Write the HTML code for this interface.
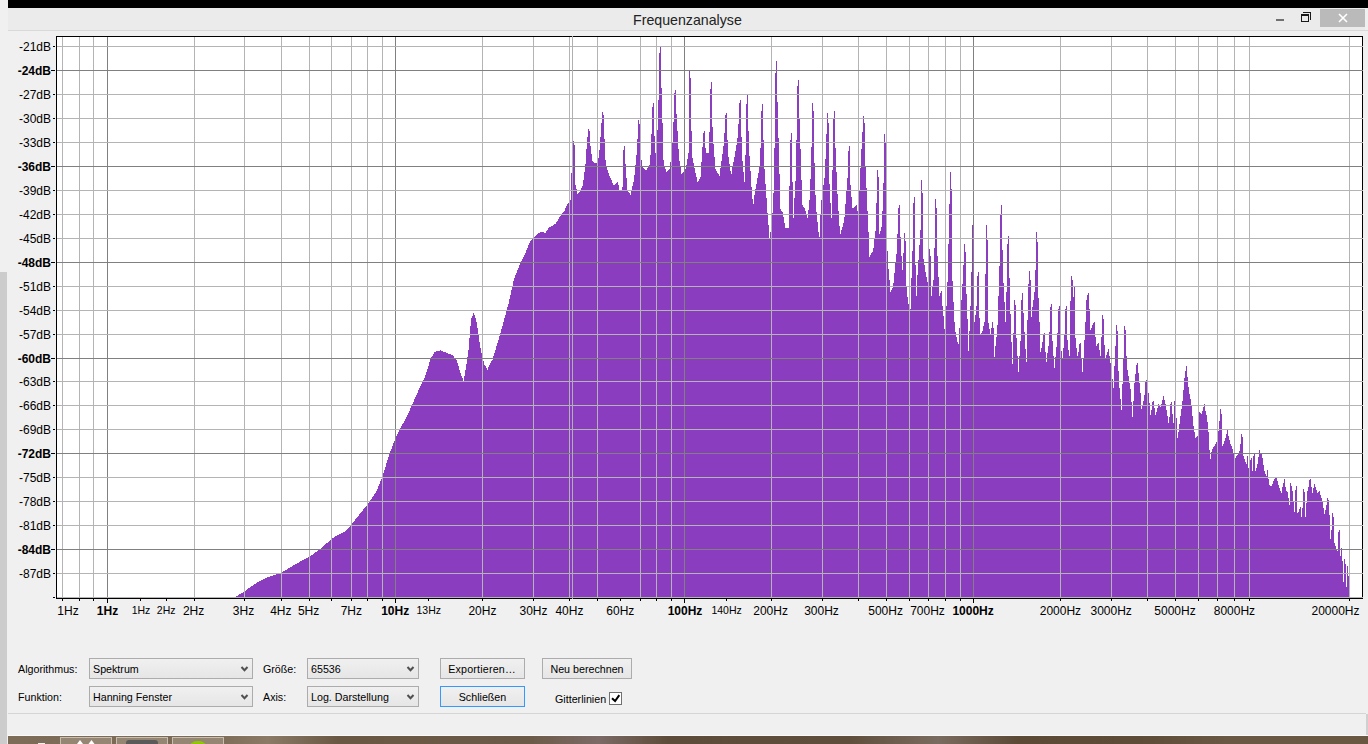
<!DOCTYPE html><html><head><meta charset="utf-8"><style>
html,body{margin:0;padding:0}
body{width:1368px;height:744px;overflow:hidden;position:relative;background:#f0f0f0;font-family:"Liberation Sans",sans-serif}
.abs{position:absolute}
.lbl{position:absolute;font-size:10.7px;color:#000;white-space:nowrap;line-height:1}
.cb{position:absolute;box-sizing:border-box;border:1px solid #acacac;background:linear-gradient(#f0f0f0,#e6e6e6);height:21px}
.cb span{position:absolute;left:3px;top:5px;font-size:10.7px;line-height:1;white-space:nowrap}
.cb svg{position:absolute;right:3px;top:7px}
.bt{position:absolute;box-sizing:border-box;border:1px solid #acacac;background:linear-gradient(#f0f0f0,#e6e6e6);height:21px;font-size:10.7px;line-height:1;text-align:center;white-space:nowrap}
.bt span{position:absolute;left:0;right:0;top:5px}

</style></head><body>
<div class="abs" style="left:0;top:272px;width:7px;height:472px;background:#cccccc"></div>
<div class="abs" style="left:8px;top:0;width:1360px;height:8px;background:#000"></div>
<div class="abs" style="left:8px;top:8px;width:1357px;height:22px;background:#ebebeb"></div>
<div class="abs" style="left:8px;top:30px;width:1360px;height:1px;background:#d9d9d9"></div>
<div class="abs" style="left:633px;top:13px;font-size:14.2px;line-height:1;color:#222;white-space:nowrap">Frequenzanalyse</div>
<div class="abs" style="left:1276px;top:19px;width:8px;height:2px;background:#707070"></div>
<svg class="abs" style="left:1298px;top:10px" width="16" height="14" viewBox="0 0 16 14" shape-rendering="crispEdges">
<path d="M5 2.5H12.5V9.5" fill="none" stroke="#1a1a1a" stroke-width="1"/>
<rect x="3.5" y="4.5" width="7" height="7" fill="none" stroke="#1a1a1a" stroke-width="1"/>
<rect x="3" y="4" width="8" height="2" fill="#1a1a1a"/>
</svg>
<div class="abs" style="left:1320px;top:9px;width:45px;height:18px;background:#bababa"></div>
<svg class="abs" style="left:1338px;top:13px" width="10" height="10" viewBox="0 0 10 10">
<path d="M1 1L9 9M9 1L1 9" stroke="#fff" stroke-width="1.6"/></svg>
<svg class="abs" style="left:0;top:0" width="1368" height="744" viewBox="0 0 1368 744">
<rect x="56" y="36" width="1306" height="562" fill="#fff"/>
<path d="M235,598 V598 H236 V596 H237 V596 H238 V595 H239 V594 H240 V594 H241 V593 H242 V593 H243 V592 H244 V591 H245 V591 H246 V590 H247 V589 H248 V588 H249 V588 H250 V587 H251 V586 H252 V586 H253 V585 H254 V584 H255 V584 H256 V583 H257 V582 H258 V582 H259 V581 H260 V581 H261 V580 H262 V580 H263 V579 H264 V579 H265 V578 H266 V578 H267 V577 H268 V577 H269 V577 H270 V576 H271 V576 H272 V576 H273 V575 H274 V575 H275 V575 H276 V574 H277 V574 H278 V574 H279 V573 H280 V573 H281 V573 H282 V572 H283 V571 H284 V571 H285 V570 H286 V570 H287 V569 H288 V568 H289 V568 H290 V567 H291 V567 H292 V566 H293 V565 H294 V565 H295 V564 H296 V564 H297 V563 H298 V563 H299 V562 H300 V561 H301 V561 H302 V560 H303 V560 H304 V559 H305 V559 H306 V558 H307 V558 H308 V557 H309 V557 H310 V556 H311 V555 H312 V555 H313 V554 H314 V553 H315 V552 H316 V552 H317 V551 H318 V550 H319 V549 H320 V549 H321 V548 H322 V547 H323 V546 H324 V545 H325 V544 H326 V543 H327 V543 H328 V542 H329 V541 H330 V540 H331 V539 H332 V538 H333 V538 H334 V537 H335 V536 H336 V536 H337 V535 H338 V535 H339 V534 H340 V534 H341 V533 H342 V533 H343 V532 H344 V532 H345 V531 H346 V530 H347 V529 H348 V528 H349 V527 H350 V526 H351 V524 H352 V523 H353 V522 H354 V521 H355 V519 H356 V518 H357 V517 H358 V516 H359 V514 H360 V513 H361 V512 H362 V511 H363 V509 H364 V508 H365 V507 H366 V506 H367 V504 H368 V503 H369 V502 H370 V500 H371 V499 H372 V497 H373 V496 H374 V494 H375 V493 H376 V491 H377 V489 H378 V486 H379 V484 H380 V481 H381 V479 H382 V476 H383 V473 H384 V470 H385 V467 H386 V463 H387 V460 H388 V457 H389 V454 H390 V451 H391 V449 H392 V446 H393 V443 H394 V441 H395 V438 H396 V436 H397 V434 H398 V432 H399 V430 H400 V428 H401 V426 H402 V424 H403 V423 H404 V421 H405 V419 H406 V417 H407 V415 H408 V413 H409 V411 H410 V408 H411 V406 H412 V404 H413 V402 H414 V399 H415 V397 H416 V395 H417 V393 H418 V390 H419 V388 H420 V386 H421 V384 H422 V382 H423 V380 H424 V378 H425 V375 H426 V372 H427 V369 H428 V366 H429 V362 H430 V359 H431 V357 H432 V356 H433 V354 H434 V352 H435 V352 H436 V351 H437 V351 H438 V351 H439 V351 H440 V350 H441 V351 H442 V351 H443 V352 H444 V352 H445 V352 H446 V353 H447 V353 H448 V354 H449 V354 H450 V354 H451 V355 H452 V355 H453 V356 H454 V358 H455 V359 H456 V360 H457 V363 H458 V366 H459 V370 H460 V373 H461 V376 H462 V378 H463 V381 H464 V376 H465 V370 H466 V364 H467 V357 H468 V350 H469 V338 H470 V326 H471 V318 H472 V316 H473 V313 H474 V315 H475 V318 H476 V322 H477 V328 H478 V335 H479 V342 H480 V348 H481 V353 H482 V357 H483 V361 H484 V365 H485 V366 H486 V368 H487 V370 H488 V367 H489 V365 H490 V363 H491 V361 H492 V360 H493 V356 H494 V353 H495 V350 H496 V346 H497 V343 H498 V340 H499 V336 H500 V333 H501 V329 H502 V326 H503 V322 H504 V318 H505 V315 H506 V311 H507 V307 H508 V304 H509 V299 H510 V295 H511 V290 H512 V286 H513 V281 H514 V278 H515 V275 H516 V273 H517 V270 H518 V268 H519 V265 H520 V263 H521 V261 H522 V259 H523 V257 H524 V255 H525 V253 H526 V250 H527 V248 H528 V245 H529 V243 H530 V241 H531 V240 H532 V239 H533 V238 H534 V237 H535 V236 H536 V235 H537 V234 H538 V233 H539 V233 H540 V232 H541 V232 H542 V232 H543 V232 H544 V233 H545 V233 H546 V231 H547 V230 H548 V228 H549 V227 H550 V227 H551 V226 H552 V226 H553 V225 H554 V224 H555 V224 H556 V222 H557 V221 H558 V219 H559 V217 H560 V216 H561 V214 H562 V213 H563 V212 H564 V211 H565 V208 H566 V206 H567 V204 H568 V203 H569 V202 H570 V200 H571 V173 H572 V154 H573 V141 H574 V145 H575 V185 H576 V189 H577 V194 H578 V193 H579 V192 H580 V190 H581 V188 H582 V186 H583 V180 H584 V172 H585 V164 H586 V149 H587 V137 H588 V129 H589 V131 H590 V146 H591 V154 H592 V161 H593 V162 H594 V163 H595 V163 H596 V163 H597 V164 H598 V158 H599 V150 H600 V137 H601 V123 H602 V112 H603 V115 H604 V139 H605 V160 H606 V166 H607 V170 H608 V173 H609 V176 H610 V178 H611 V180 H612 V183 H613 V185 H614 V185 H615 V184 H616 V183 H617 V182 H618 V185 H619 V190 H620 V190 H621 V190 H622 V187 H623 V150 H624 V146 H625 V164 H626 V178 H627 V191 H628 V192 H629 V193 H630 V195 H631 V190 H632 V186 H633 V182 H634 V175 H635 V165 H636 V155 H637 V139 H638 V120 H639 V124 H640 V146 H641 V160 H642 V167 H643 V168 H644 V169 H645 V170 H646 V170 H647 V168 H648 V166 H649 V165 H650 V155 H651 V134 H652 V107 H653 V103 H654 V136 H655 V153 H656 V164 H657 V130 H658 V100 H659 V53 H660 V47 H661 V88 H662 V123 H663 V160 H664 V166 H665 V169 H666 V172 H667 V171 H668 V170 H669 V169 H670 V162 H671 V152 H672 V142 H673 V122 H674 V93 H675 V90 H676 V114 H677 V131 H678 V149 H679 V161 H680 V167 H681 V174 H682 V173 H683 V172 H684 V171 H685 V169 H686 V165 H687 V159 H688 V153 H689 V70 H690 V78 H691 V131 H692 V158 H693 V163 H694 V168 H695 V173 H696 V177 H697 V182 H698 V181 H699 V179 H700 V177 H701 V162 H702 V147 H703 V133 H704 V131 H705 V148 H706 V153 H707 V153 H708 V153 H709 V132 H710 V89 H711 V82 H712 V127 H713 V144 H714 V157 H715 V169 H716 V171 H717 V173 H718 V174 H719 V176 H720 V168 H721 V161 H722 V154 H723 V146 H724 V133 H725 V115 H726 V113 H727 V140 H728 V157 H729 V164 H730 V171 H731 V174 H732 V167 H733 V162 H734 V157 H735 V151 H736 V145 H737 V138 H738 V124 H739 V103 H740 V100 H741 V137 H742 V161 H743 V172 H744 V182 H745 V155 H746 V104 H747 V95 H748 V131 H749 V156 H750 V171 H751 V187 H752 V199 H753 V204 H754 V195 H755 V189 H756 V184 H757 V178 H758 V173 H759 V167 H760 V148 H761 V111 H762 V104 H763 V140 H764 V169 H765 V184 H766 V198 H767 V213 H768 V225 H769 V239 H770 V232 H771 V222 H772 V213 H773 V193 H774 V148 H775 V73 H776 V61 H777 V102 H778 V138 H779 V174 H780 V209 H781 V211 H782 V212 H783 V217 H784 V223 H785 V228 H786 V228 H787 V228 H788 V228 H789 V186 H790 V140 H791 V133 H792 V182 H793 V218 H794 V198 H795 V181 H796 V140 H797 V86 H798 V80 H799 V118 H800 V149 H801 V180 H802 V205 H803 V207 H804 V208 H805 V211 H806 V214 H807 V218 H808 V210 H809 V200 H810 V179 H811 V147 H812 V103 H813 V111 H814 V163 H815 V195 H816 V212 H817 V222 H818 V232 H819 V237 H820 V215 H821 V200 H822 V192 H823 V185 H824 V178 H825 V159 H826 V134 H827 V113 H828 V123 H829 V184 H830 V203 H831 V218 H832 V170 H833 V118 H834 V111 H835 V148 H836 V172 H837 V194 H838 V211 H839 V226 H840 V234 H841 V230 H842 V227 H843 V223 H844 V217 H845 V204 H846 V191 H847 V178 H848 V151 H849 V146 H850 V185 H851 V197 H852 V208 H853 V208 H854 V207 H855 V206 H856 V205 H857 V211 H858 V215 H859 V190 H860 V168 H861 V149 H862 V132 H863 V116 H864 V123 H865 V166 H866 V188 H867 V211 H868 V232 H869 V257 H870 V255 H871 V253 H872 V252 H873 V248 H874 V239 H875 V231 H876 V203 H877 V170 H878 V177 H879 V234 H880 V231 H881 V227 H882 V211 H883 V183 H884 V134 H885 V142 H886 V207 H887 V251 H888 V269 H889 V280 H890 V292 H891 V290 H892 V288 H893 V283 H894 V273 H895 V263 H896 V254 H897 V234 H898 V208 H899 V205 H900 V237 H901 V256 H902 V270 H903 V253 H904 V233 H905 V241 H906 V286 H907 V297 H908 V304 H909 V307 H910 V309 H911 V278 H912 V251 H913 V203 H914 V197 H915 V265 H916 V296 H917 V275 H918 V260 H919 V245 H920 V230 H921 V180 H922 V193 H923 V259 H924 V265 H925 V272 H926 V277 H927 V282 H928 V286 H929 V249 H930 V256 H931 V296 H932 V287 H933 V280 H934 V248 H935 V199 H936 V208 H937 V256 H938 V277 H939 V296 H940 V293 H941 V291 H942 V306 H943 V316 H944 V329 H945 V338 H946 V306 H947 V282 H948 V244 H949 V204 H950 V172 H951 V189 H952 V281 H953 V302 H954 V322 H955 V332 H956 V337 H957 V342 H958 V344 H959 V328 H960 V317 H961 V300 H962 V284 H963 V265 H964 V244 H965 V252 H966 V294 H967 V319 H968 V351 H969 V331 H970 V306 H971 V272 H972 V225 H973 V237 H974 V322 H975 V315 H976 V306 H977 V276 H978 V272 H979 V318 H980 V335 H981 V333 H982 V331 H983 V326 H984 V322 H985 V274 H986 V225 H987 V240 H988 V323 H989 V329 H990 V335 H991 V328 H992 V322 H993 V328 H994 V357 H995 V346 H996 V337 H997 V325 H998 V296 H999 V266 H1000 V214 H1001 V205 H1002 V250 H1003 V283 H1004 V302 H1005 V322 H1006 V292 H1007 V244 H1008 V236 H1009 V278 H1010 V314 H1011 V342 H1012 V364 H1013 V333 H1014 V300 H1015 V305 H1016 V338 H1017 V356 H1018 V372 H1019 V356 H1020 V341 H1021 V300 H1022 V293 H1023 V313 H1024 V332 H1025 V349 H1026 V362 H1027 V320 H1028 V284 H1029 V271 H1030 V280 H1031 V317 H1032 V307 H1033 V300 H1034 V292 H1035 V270 H1036 V232 H1037 V242 H1038 V298 H1039 V322 H1040 V352 H1041 V348 H1042 V342 H1043 V334 H1044 V333 H1045 V352 H1046 V362 H1047 V353 H1048 V346 H1049 V332 H1050 V307 H1051 V304 H1052 V341 H1053 V356 H1054 V368 H1055 V357 H1056 V347 H1057 V333 H1058 V309 H1059 V306 H1060 V338 H1061 V351 H1062 V359 H1063 V348 H1064 V334 H1065 V309 H1066 V306 H1067 V340 H1068 V350 H1069 V356 H1070 V301 H1071 V276 H1072 V280 H1073 V297 H1074 V286 H1075 V338 H1076 V348 H1077 V356 H1078 V352 H1079 V344 H1080 V343 H1081 V358 H1082 V372 H1083 V358 H1084 V340 H1085 V322 H1086 V300 H1087 V295 H1088 V293 H1089 V309 H1090 V330 H1091 V328 H1092 V325 H1093 V323 H1094 V322 H1095 V337 H1096 V346 H1097 V344 H1098 V343 H1099 V350 H1100 V356 H1101 V337 H1102 V315 H1103 V319 H1104 V345 H1105 V359 H1106 V355 H1107 V352 H1108 V349 H1109 V356 H1110 V363 H1111 V370 H1112 V379 H1113 V388 H1114 V366 H1115 V346 H1116 V325 H1117 V331 H1118 V371 H1119 V388 H1120 V399 H1121 V410 H1122 V384 H1123 V358 H1124 V326 H1125 V330 H1126 V356 H1127 V370 H1128 V376 H1129 V383 H1130 V389 H1131 V402 H1132 V417 H1133 V401 H1134 V383 H1135 V374 H1136 V365 H1137 V363 H1138 V373 H1139 V383 H1140 V393 H1141 V409 H1142 V406 H1143 V401 H1144 V395 H1145 V381 H1146 V380 H1147 V388 H1148 V393 H1149 V403 H1150 V415 H1151 V410 H1152 V402 H1153 V401 H1154 V408 H1155 V415 H1156 V412 H1157 V408 H1158 V404 H1159 V406 H1160 V407 H1161 V404 H1162 V400 H1163 V396 H1164 V400 H1165 V404 H1166 V410 H1167 V416 H1168 V423 H1169 V417 H1170 V404 H1171 V402 H1172 V414 H1173 V423 H1174 V401 H1175 V397 H1176 V418 H1177 V438 H1178 V432 H1179 V424 H1180 V416 H1181 V409 H1182 V401 H1183 V390 H1184 V378 H1185 V371 H1186 V366 H1187 V377 H1188 V387 H1189 V394 H1190 V399 H1191 V406 H1192 V416 H1193 V426 H1194 V432 H1195 V438 H1196 V437 H1197 V436 H1198 V425 H1199 V412 H1200 V413 H1201 V414 H1202 V411 H1203 V407 H1204 V404 H1205 V411 H1206 V415 H1207 V422 H1208 V432 H1209 V450 H1210 V459 H1211 V452 H1212 V449 H1213 V447 H1214 V446 H1215 V444 H1216 V442 H1217 V440 H1218 V431 H1219 V421 H1220 V409 H1221 V414 H1222 V446 H1223 V444 H1224 V441 H1225 V438 H1226 V434 H1227 V430 H1228 V436 H1229 V440 H1230 V444 H1231 V446 H1232 V449 H1233 V453 H1234 V459 H1235 V458 H1236 V456 H1237 V455 H1238 V453 H1239 V451 H1240 V444 H1241 V434 H1242 V437 H1243 V456 H1244 V459 H1245 V462 H1246 V464 H1247 V456 H1248 V468 H1249 V464 H1250 V460 H1251 V458 H1252 V471 H1253 V456 H1254 V454 H1255 V471 H1256 V468 H1257 V464 H1258 V457 H1259 V450 H1260 V454 H1261 V454 H1262 V458 H1263 V465 H1264 V471 H1265 V474 H1266 V476 H1267 V470 H1268 V479 H1269 V485 H1270 V486 H1271 V486 H1272 V484 H1273 V481 H1274 V479 H1275 V478 H1276 V477 H1277 V481 H1278 V485 H1279 V488 H1280 V491 H1281 V493 H1282 V487 H1283 V483 H1284 V479 H1285 V487 H1286 V491 H1287 V492 H1288 V498 H1289 V505 H1290 V483 H1291 V486 H1292 V491 H1293 V501 H1294 V512 H1295 V490 H1296 V486 H1297 V513 H1298 V512 H1299 V509 H1300 V507 H1301 V517 H1302 V508 H1303 V489 H1304 V492 H1305 V517 H1306 V503 H1307 V491 H1308 V487 H1309 V480 H1310 V479 H1311 V487 H1312 V493 H1313 V488 H1314 V484 H1315 V487 H1316 V490 H1317 V493 H1318 V492 H1319 V491 H1320 V495 H1321 V498 H1322 V502 H1323 V508 H1324 V514 H1325 V510 H1326 V505 H1327 V498 H1328 V500 H1329 V515 H1330 V539 H1331 V530 H1332 V513 H1333 V517 H1334 V543 H1335 V546 H1336 V549 H1337 V551 H1338 V532 H1339 V530 H1340 V556 H1341 V548 H1342 V561 H1343 V582 H1344 V559 H1345 V564 H1346 V587 H1347 V566 H1348 V576 H1349 V598 Z" fill="rgb(138,61,191)" shape-rendering="crispEdges"/>
<g shape-rendering="crispEdges">
<rect x="62" y="37" width="1" height="561" fill="#b4b4b4"/>
<rect x="79" y="37" width="1" height="561" fill="#b4b4b4"/>
<rect x="93" y="37" width="1" height="561" fill="#b4b4b4"/>
<rect x="107" y="37" width="1" height="561" fill="#808080"/>
<rect x="194" y="37" width="1" height="561" fill="#b4b4b4"/>
<rect x="244" y="37" width="1" height="561" fill="#b4b4b4"/>
<rect x="281" y="37" width="1" height="561" fill="#b4b4b4"/>
<rect x="309" y="37" width="1" height="561" fill="#b4b4b4"/>
<rect x="331" y="37" width="1" height="561" fill="#b4b4b4"/>
<rect x="351" y="37" width="1" height="561" fill="#b4b4b4"/>
<rect x="367" y="37" width="1" height="561" fill="#b4b4b4"/>
<rect x="382" y="37" width="1" height="561" fill="#b4b4b4"/>
<rect x="395" y="37" width="1" height="561" fill="#808080"/>
<rect x="482" y="37" width="1" height="561" fill="#b4b4b4"/>
<rect x="533" y="37" width="1" height="561" fill="#b4b4b4"/>
<rect x="569" y="37" width="1" height="561" fill="#b4b4b4"/>
<rect x="597" y="37" width="1" height="561" fill="#b4b4b4"/>
<rect x="640" y="37" width="1" height="561" fill="#b4b4b4"/>
<rect x="656" y="37" width="1" height="561" fill="#b4b4b4"/>
<rect x="671" y="37" width="1" height="561" fill="#b4b4b4"/>
<rect x="684" y="37" width="1" height="561" fill="#808080"/>
<rect x="771" y="37" width="1" height="561" fill="#b4b4b4"/>
<rect x="822" y="37" width="1" height="561" fill="#b4b4b4"/>
<rect x="858" y="37" width="1" height="561" fill="#b4b4b4"/>
<rect x="886" y="37" width="1" height="561" fill="#b4b4b4"/>
<rect x="909" y="37" width="1" height="561" fill="#b4b4b4"/>
<rect x="928" y="37" width="1" height="561" fill="#b4b4b4"/>
<rect x="945" y="37" width="1" height="561" fill="#b4b4b4"/>
<rect x="960" y="37" width="1" height="561" fill="#b4b4b4"/>
<rect x="973" y="37" width="1" height="561" fill="#808080"/>
<rect x="1060" y="37" width="1" height="561" fill="#b4b4b4"/>
<rect x="1111" y="37" width="1" height="561" fill="#b4b4b4"/>
<rect x="1147" y="37" width="1" height="561" fill="#b4b4b4"/>
<rect x="1175" y="37" width="1" height="561" fill="#b4b4b4"/>
<rect x="1198" y="37" width="1" height="561" fill="#b4b4b4"/>
<rect x="1217" y="37" width="1" height="561" fill="#b4b4b4"/>
<rect x="1234" y="37" width="1" height="561" fill="#b4b4b4"/>
<rect x="1249" y="37" width="1" height="561" fill="#b4b4b4"/>
<rect x="1349" y="37" width="1" height="561" fill="#b4b4b4"/>
<rect x="57" y="46" width="1305" height="1" fill="#b4b4b4"/>
<rect x="57" y="70" width="1305" height="1" fill="#808080"/>
<rect x="57" y="94" width="1305" height="1" fill="#b4b4b4"/>
<rect x="57" y="118" width="1305" height="1" fill="#b4b4b4"/>
<rect x="57" y="142" width="1305" height="1" fill="#b4b4b4"/>
<rect x="57" y="166" width="1305" height="1" fill="#808080"/>
<rect x="57" y="190" width="1305" height="1" fill="#b4b4b4"/>
<rect x="57" y="214" width="1305" height="1" fill="#b4b4b4"/>
<rect x="57" y="238" width="1305" height="1" fill="#b4b4b4"/>
<rect x="57" y="262" width="1305" height="1" fill="#808080"/>
<rect x="57" y="286" width="1305" height="1" fill="#b4b4b4"/>
<rect x="57" y="310" width="1305" height="1" fill="#b4b4b4"/>
<rect x="57" y="334" width="1305" height="1" fill="#b4b4b4"/>
<rect x="57" y="358" width="1305" height="1" fill="#808080"/>
<rect x="57" y="381" width="1305" height="1" fill="#b4b4b4"/>
<rect x="57" y="405" width="1305" height="1" fill="#b4b4b4"/>
<rect x="57" y="429" width="1305" height="1" fill="#b4b4b4"/>
<rect x="57" y="453" width="1305" height="1" fill="#808080"/>
<rect x="57" y="477" width="1305" height="1" fill="#b4b4b4"/>
<rect x="57" y="501" width="1305" height="1" fill="#b4b4b4"/>
<rect x="57" y="525" width="1305" height="1" fill="#b4b4b4"/>
<rect x="57" y="549" width="1305" height="1" fill="#808080"/>
<rect x="57" y="573" width="1305" height="1" fill="#b4b4b4"/>
<rect x="57" y="597" width="1305" height="1" fill="#b4b4b4"/>
</g>
<rect x="56.5" y="36.5" width="1306" height="562" fill="none" stroke="#000" stroke-width="1" shape-rendering="crispEdges"/>
<rect x="572" y="36" width="1" height="563" fill="#b0b0b0" shape-rendering="crispEdges"/>
<rect x="1362" y="46" width="1" height="1" fill="#b4b4b4" shape-rendering="crispEdges"/>
<rect x="1362" y="70" width="1" height="1" fill="#808080" shape-rendering="crispEdges"/>
<rect x="1362" y="94" width="1" height="1" fill="#b4b4b4" shape-rendering="crispEdges"/>
<rect x="1362" y="118" width="1" height="1" fill="#b4b4b4" shape-rendering="crispEdges"/>
<rect x="1362" y="142" width="1" height="1" fill="#b4b4b4" shape-rendering="crispEdges"/>
<rect x="1362" y="166" width="1" height="1" fill="#808080" shape-rendering="crispEdges"/>
<rect x="1362" y="190" width="1" height="1" fill="#b4b4b4" shape-rendering="crispEdges"/>
<rect x="1362" y="214" width="1" height="1" fill="#b4b4b4" shape-rendering="crispEdges"/>
<rect x="1362" y="238" width="1" height="1" fill="#b4b4b4" shape-rendering="crispEdges"/>
<rect x="1362" y="262" width="1" height="1" fill="#808080" shape-rendering="crispEdges"/>
<rect x="1362" y="286" width="1" height="1" fill="#b4b4b4" shape-rendering="crispEdges"/>
<rect x="1362" y="310" width="1" height="1" fill="#b4b4b4" shape-rendering="crispEdges"/>
<rect x="1362" y="334" width="1" height="1" fill="#b4b4b4" shape-rendering="crispEdges"/>
<rect x="1362" y="358" width="1" height="1" fill="#808080" shape-rendering="crispEdges"/>
<rect x="1362" y="381" width="1" height="1" fill="#b4b4b4" shape-rendering="crispEdges"/>
<rect x="1362" y="405" width="1" height="1" fill="#b4b4b4" shape-rendering="crispEdges"/>
<rect x="1362" y="429" width="1" height="1" fill="#b4b4b4" shape-rendering="crispEdges"/>
<rect x="1362" y="453" width="1" height="1" fill="#808080" shape-rendering="crispEdges"/>
<rect x="1362" y="477" width="1" height="1" fill="#b4b4b4" shape-rendering="crispEdges"/>
<rect x="1362" y="501" width="1" height="1" fill="#b4b4b4" shape-rendering="crispEdges"/>
<rect x="1362" y="525" width="1" height="1" fill="#b4b4b4" shape-rendering="crispEdges"/>
<rect x="1362" y="549" width="1" height="1" fill="#808080" shape-rendering="crispEdges"/>
<rect x="1362" y="573" width="1" height="1" fill="#b4b4b4" shape-rendering="crispEdges"/>
<rect x="1362" y="597" width="1" height="1" fill="#b4b4b4" shape-rendering="crispEdges"/>
<rect x="53" y="46" width="2" height="1" fill="#000" shape-rendering="crispEdges"/>
<text x="51" y="50.5" text-anchor="end" font-family="Liberation Sans" font-size="12" font-weight="normal" fill="#000">-21dB</text>
<rect x="51" y="70" width="4" height="1" fill="#000" shape-rendering="crispEdges"/>
<text x="51" y="74.5" text-anchor="end" font-family="Liberation Sans" font-size="12" font-weight="bold" fill="#000">-24dB</text>
<rect x="53" y="94" width="2" height="1" fill="#000" shape-rendering="crispEdges"/>
<text x="51" y="98.5" text-anchor="end" font-family="Liberation Sans" font-size="12" font-weight="normal" fill="#000">-27dB</text>
<rect x="53" y="118" width="2" height="1" fill="#000" shape-rendering="crispEdges"/>
<text x="51" y="122.5" text-anchor="end" font-family="Liberation Sans" font-size="12" font-weight="normal" fill="#000">-30dB</text>
<rect x="53" y="142" width="2" height="1" fill="#000" shape-rendering="crispEdges"/>
<text x="51" y="146.5" text-anchor="end" font-family="Liberation Sans" font-size="12" font-weight="normal" fill="#000">-33dB</text>
<rect x="51" y="166" width="4" height="1" fill="#000" shape-rendering="crispEdges"/>
<text x="51" y="170.5" text-anchor="end" font-family="Liberation Sans" font-size="12" font-weight="bold" fill="#000">-36dB</text>
<rect x="53" y="190" width="2" height="1" fill="#000" shape-rendering="crispEdges"/>
<text x="51" y="194.5" text-anchor="end" font-family="Liberation Sans" font-size="12" font-weight="normal" fill="#000">-39dB</text>
<rect x="53" y="214" width="2" height="1" fill="#000" shape-rendering="crispEdges"/>
<text x="51" y="218.5" text-anchor="end" font-family="Liberation Sans" font-size="12" font-weight="normal" fill="#000">-42dB</text>
<rect x="53" y="238" width="2" height="1" fill="#000" shape-rendering="crispEdges"/>
<text x="51" y="242.5" text-anchor="end" font-family="Liberation Sans" font-size="12" font-weight="normal" fill="#000">-45dB</text>
<rect x="51" y="262" width="4" height="1" fill="#000" shape-rendering="crispEdges"/>
<text x="51" y="266.5" text-anchor="end" font-family="Liberation Sans" font-size="12" font-weight="bold" fill="#000">-48dB</text>
<rect x="53" y="286" width="2" height="1" fill="#000" shape-rendering="crispEdges"/>
<text x="51" y="290.5" text-anchor="end" font-family="Liberation Sans" font-size="12" font-weight="normal" fill="#000">-51dB</text>
<rect x="53" y="310" width="2" height="1" fill="#000" shape-rendering="crispEdges"/>
<text x="51" y="314.5" text-anchor="end" font-family="Liberation Sans" font-size="12" font-weight="normal" fill="#000">-54dB</text>
<rect x="53" y="334" width="2" height="1" fill="#000" shape-rendering="crispEdges"/>
<text x="51" y="338.5" text-anchor="end" font-family="Liberation Sans" font-size="12" font-weight="normal" fill="#000">-57dB</text>
<rect x="51" y="358" width="4" height="1" fill="#000" shape-rendering="crispEdges"/>
<text x="51" y="362.5" text-anchor="end" font-family="Liberation Sans" font-size="12" font-weight="bold" fill="#000">-60dB</text>
<rect x="53" y="381" width="2" height="1" fill="#000" shape-rendering="crispEdges"/>
<text x="51" y="385.5" text-anchor="end" font-family="Liberation Sans" font-size="12" font-weight="normal" fill="#000">-63dB</text>
<rect x="53" y="405" width="2" height="1" fill="#000" shape-rendering="crispEdges"/>
<text x="51" y="409.5" text-anchor="end" font-family="Liberation Sans" font-size="12" font-weight="normal" fill="#000">-66dB</text>
<rect x="53" y="429" width="2" height="1" fill="#000" shape-rendering="crispEdges"/>
<text x="51" y="433.5" text-anchor="end" font-family="Liberation Sans" font-size="12" font-weight="normal" fill="#000">-69dB</text>
<rect x="51" y="453" width="4" height="1" fill="#000" shape-rendering="crispEdges"/>
<text x="51" y="457.5" text-anchor="end" font-family="Liberation Sans" font-size="12" font-weight="bold" fill="#000">-72dB</text>
<rect x="53" y="477" width="2" height="1" fill="#000" shape-rendering="crispEdges"/>
<text x="51" y="481.5" text-anchor="end" font-family="Liberation Sans" font-size="12" font-weight="normal" fill="#000">-75dB</text>
<rect x="53" y="501" width="2" height="1" fill="#000" shape-rendering="crispEdges"/>
<text x="51" y="505.5" text-anchor="end" font-family="Liberation Sans" font-size="12" font-weight="normal" fill="#000">-78dB</text>
<rect x="53" y="525" width="2" height="1" fill="#000" shape-rendering="crispEdges"/>
<text x="51" y="529.5" text-anchor="end" font-family="Liberation Sans" font-size="12" font-weight="normal" fill="#000">-81dB</text>
<rect x="51" y="549" width="4" height="1" fill="#000" shape-rendering="crispEdges"/>
<text x="51" y="553.5" text-anchor="end" font-family="Liberation Sans" font-size="12" font-weight="bold" fill="#000">-84dB</text>
<rect x="53" y="573" width="2" height="1" fill="#000" shape-rendering="crispEdges"/>
<text x="51" y="577.5" text-anchor="end" font-family="Liberation Sans" font-size="12" font-weight="normal" fill="#000">-87dB</text>
<rect x="53" y="597" width="2" height="1" fill="#000" shape-rendering="crispEdges"/>
<rect x="62" y="599" width="1" height="2" fill="#000" shape-rendering="crispEdges"/>
<rect x="79" y="599" width="1" height="2" fill="#000" shape-rendering="crispEdges"/>
<rect x="93" y="599" width="1" height="2" fill="#000" shape-rendering="crispEdges"/>
<rect x="107" y="599" width="1" height="4" fill="#000" shape-rendering="crispEdges"/>
<rect x="194" y="599" width="1" height="2" fill="#000" shape-rendering="crispEdges"/>
<rect x="244" y="599" width="1" height="2" fill="#000" shape-rendering="crispEdges"/>
<rect x="281" y="599" width="1" height="2" fill="#000" shape-rendering="crispEdges"/>
<rect x="309" y="599" width="1" height="2" fill="#000" shape-rendering="crispEdges"/>
<rect x="331" y="599" width="1" height="2" fill="#000" shape-rendering="crispEdges"/>
<rect x="351" y="599" width="1" height="2" fill="#000" shape-rendering="crispEdges"/>
<rect x="367" y="599" width="1" height="2" fill="#000" shape-rendering="crispEdges"/>
<rect x="382" y="599" width="1" height="2" fill="#000" shape-rendering="crispEdges"/>
<rect x="395" y="599" width="1" height="4" fill="#000" shape-rendering="crispEdges"/>
<rect x="482" y="599" width="1" height="2" fill="#000" shape-rendering="crispEdges"/>
<rect x="533" y="599" width="1" height="2" fill="#000" shape-rendering="crispEdges"/>
<rect x="569" y="599" width="1" height="2" fill="#000" shape-rendering="crispEdges"/>
<rect x="597" y="599" width="1" height="2" fill="#000" shape-rendering="crispEdges"/>
<rect x="620" y="599" width="1" height="2" fill="#000" shape-rendering="crispEdges"/>
<rect x="640" y="599" width="1" height="2" fill="#000" shape-rendering="crispEdges"/>
<rect x="656" y="599" width="1" height="2" fill="#000" shape-rendering="crispEdges"/>
<rect x="671" y="599" width="1" height="2" fill="#000" shape-rendering="crispEdges"/>
<rect x="684" y="599" width="1" height="4" fill="#000" shape-rendering="crispEdges"/>
<rect x="771" y="599" width="1" height="2" fill="#000" shape-rendering="crispEdges"/>
<rect x="822" y="599" width="1" height="2" fill="#000" shape-rendering="crispEdges"/>
<rect x="858" y="599" width="1" height="2" fill="#000" shape-rendering="crispEdges"/>
<rect x="886" y="599" width="1" height="2" fill="#000" shape-rendering="crispEdges"/>
<rect x="909" y="599" width="1" height="2" fill="#000" shape-rendering="crispEdges"/>
<rect x="928" y="599" width="1" height="2" fill="#000" shape-rendering="crispEdges"/>
<rect x="945" y="599" width="1" height="2" fill="#000" shape-rendering="crispEdges"/>
<rect x="960" y="599" width="1" height="2" fill="#000" shape-rendering="crispEdges"/>
<rect x="973" y="599" width="1" height="4" fill="#000" shape-rendering="crispEdges"/>
<rect x="1060" y="599" width="1" height="2" fill="#000" shape-rendering="crispEdges"/>
<rect x="1111" y="599" width="1" height="2" fill="#000" shape-rendering="crispEdges"/>
<rect x="1147" y="599" width="1" height="2" fill="#000" shape-rendering="crispEdges"/>
<rect x="1175" y="599" width="1" height="2" fill="#000" shape-rendering="crispEdges"/>
<rect x="1198" y="599" width="1" height="2" fill="#000" shape-rendering="crispEdges"/>
<rect x="1217" y="599" width="1" height="2" fill="#000" shape-rendering="crispEdges"/>
<rect x="1234" y="599" width="1" height="2" fill="#000" shape-rendering="crispEdges"/>
<rect x="1249" y="599" width="1" height="2" fill="#000" shape-rendering="crispEdges"/>
<rect x="1349" y="599" width="1" height="2" fill="#000" shape-rendering="crispEdges"/>
<rect x="140" y="599" width="1" height="2" fill="#000" shape-rendering="crispEdges"/>
<rect x="166" y="599" width="1" height="2" fill="#000" shape-rendering="crispEdges"/>
<rect x="428" y="599" width="1" height="2" fill="#000" shape-rendering="crispEdges"/>
<rect x="726" y="599" width="1" height="2" fill="#000" shape-rendering="crispEdges"/>
<text x="68" y="614.5" text-anchor="middle" font-family="Liberation Sans" font-size="12" font-weight="normal" fill="#000">1Hz</text>
<text x="107.5" y="614.5" text-anchor="middle" font-family="Liberation Sans" font-size="12" font-weight="bold" fill="#000">1Hz</text>
<text x="141" y="614" text-anchor="middle" font-family="Liberation Sans" font-size="10.5" font-weight="normal" fill="#000">1Hz</text>
<text x="166.2" y="614" text-anchor="middle" font-family="Liberation Sans" font-size="10.5" font-weight="normal" fill="#000">2Hz</text>
<text x="193.6" y="614.5" text-anchor="middle" font-family="Liberation Sans" font-size="12" font-weight="normal" fill="#000">2Hz</text>
<text x="243.5" y="614.5" text-anchor="middle" font-family="Liberation Sans" font-size="12" font-weight="normal" fill="#000">3Hz</text>
<text x="280.8" y="614.5" text-anchor="middle" font-family="Liberation Sans" font-size="12" font-weight="normal" fill="#000">4Hz</text>
<text x="308.6" y="614.5" text-anchor="middle" font-family="Liberation Sans" font-size="12" font-weight="normal" fill="#000">5Hz</text>
<text x="351.3" y="614.5" text-anchor="middle" font-family="Liberation Sans" font-size="12" font-weight="normal" fill="#000">7Hz</text>
<text x="395.2" y="614.5" text-anchor="middle" font-family="Liberation Sans" font-size="12" font-weight="bold" fill="#000">10Hz</text>
<text x="428.8" y="614" text-anchor="middle" font-family="Liberation Sans" font-size="10.5" font-weight="normal" fill="#000">13Hz</text>
<text x="482.4" y="614.5" text-anchor="middle" font-family="Liberation Sans" font-size="12" font-weight="normal" fill="#000">20Hz</text>
<text x="533.5" y="614.5" text-anchor="middle" font-family="Liberation Sans" font-size="12" font-weight="normal" fill="#000">30Hz</text>
<text x="569.4" y="614.5" text-anchor="middle" font-family="Liberation Sans" font-size="12" font-weight="normal" fill="#000">40Hz</text>
<text x="620.3" y="614.5" text-anchor="middle" font-family="Liberation Sans" font-size="12" font-weight="normal" fill="#000">60Hz</text>
<text x="685" y="614.5" text-anchor="middle" font-family="Liberation Sans" font-size="12" font-weight="bold" fill="#000">100Hz</text>
<text x="726.6" y="614" text-anchor="middle" font-family="Liberation Sans" font-size="10.5" font-weight="normal" fill="#000">140Hz</text>
<text x="770.6" y="614.5" text-anchor="middle" font-family="Liberation Sans" font-size="12" font-weight="normal" fill="#000">200Hz</text>
<text x="821.5" y="614.5" text-anchor="middle" font-family="Liberation Sans" font-size="12" font-weight="normal" fill="#000">300Hz</text>
<text x="885.6" y="614.5" text-anchor="middle" font-family="Liberation Sans" font-size="12" font-weight="normal" fill="#000">500Hz</text>
<text x="927.5" y="614.5" text-anchor="middle" font-family="Liberation Sans" font-size="12" font-weight="normal" fill="#000">700Hz</text>
<text x="973.1" y="614.5" text-anchor="middle" font-family="Liberation Sans" font-size="12" font-weight="bold" fill="#000">1000Hz</text>
<text x="1060.4" y="614.5" text-anchor="middle" font-family="Liberation Sans" font-size="12" font-weight="normal" fill="#000">2000Hz</text>
<text x="1111.2" y="614.5" text-anchor="middle" font-family="Liberation Sans" font-size="12" font-weight="normal" fill="#000">3000Hz</text>
<text x="1175" y="614.5" text-anchor="middle" font-family="Liberation Sans" font-size="12" font-weight="normal" fill="#000">5000Hz</text>
<text x="1234.4" y="614.5" text-anchor="middle" font-family="Liberation Sans" font-size="12" font-weight="normal" fill="#000">8000Hz</text>
<text x="1335.5" y="614.5" text-anchor="middle" font-family="Liberation Sans" font-size="12" font-weight="normal" fill="#000">20000Hz</text>
</svg>
<div class="lbl" style="left:18px;top:664px">Algorithmus:</div>
<div class="lbl" style="left:18px;top:692px">Funktion:</div>
<div class="cb" style="left:89px;top:658px;width:164px"><span>Spektrum</span><svg width="9" height="7" viewBox="0 0 9 7"><path d="M1.5 1L4.5 4.2L7.5 1" fill="none" stroke="#505050" stroke-width="2"/></svg></div>
<div class="cb" style="left:89px;top:686px;width:164px"><span>Hanning Fenster</span><svg width="9" height="7" viewBox="0 0 9 7"><path d="M1.5 1L4.5 4.2L7.5 1" fill="none" stroke="#505050" stroke-width="2"/></svg></div>
<div class="lbl" style="left:263px;top:664px">Größe:</div>
<div class="lbl" style="left:263px;top:692px">Axis:</div>
<div class="cb" style="left:307px;top:658px;width:112px"><span>65536</span><svg width="9" height="7" viewBox="0 0 9 7"><path d="M1.5 1L4.5 4.2L7.5 1" fill="none" stroke="#505050" stroke-width="2"/></svg></div>
<div class="cb" style="left:307px;top:686px;width:112px"><span>Log. Darstellung</span><svg width="9" height="7" viewBox="0 0 9 7"><path d="M1.5 1L4.5 4.2L7.5 1" fill="none" stroke="#505050" stroke-width="2"/></svg></div>
<div class="bt" style="left:440px;top:658px;width:85px"><span style="letter-spacing:0.2px;left:-1px">Exportieren…</span></div>
<div class="bt" style="left:542px;top:658px;width:90px"><span>Neu berechnen</span></div>
<div class="bt" style="left:440px;top:686px;width:85px;border-color:#3399ff"><span>Schließen</span></div>
<div class="lbl" style="left:555px;top:694px">Gitterlinien</div>
<svg class="abs" style="left:609px;top:692px" width="13" height="13" viewBox="0 0 13 13">
<rect x="0.5" y="0.5" width="12" height="12" fill="#fff" stroke="#707070"/>
<path d="M3 6.2L6.1 9.1L10.3 3.2" fill="none" stroke="#000" stroke-width="2"/></svg>
<div class="abs" style="left:8px;top:713px;width:1358px;height:1px;background:#d5d5d5"></div>
<div class="abs" style="left:1366px;top:714px;width:2px;height:22px;background:#d0d0d0"></div>
<div class="abs" style="left:8px;top:735px;width:1360px;height:1px;background:#fafafa"></div>
<div class="abs" style="left:8px;top:736px;width:1360px;height:8px;background:linear-gradient(90deg,#7d6c57 0px,#7a6955 200px,#8a7a66 260px,#6a5845 330px,#6c5a48 520px,#7b6a66 590px,#5e4c3a 660px,#5f4e3b 840px,#7a6b60 930px,#5c4a37 1010px,#5e4c38 1130px,#6b5844 1220px,#6a5843 1360px)"></div>
<div class="abs" style="left:60px;top:737px;width:52px;height:7px;box-sizing:border-box;border:1px solid #c9bfb1;border-bottom:none;background:#958573"></div>
<div class="abs" style="left:116px;top:737px;width:52px;height:7px;box-sizing:border-box;border:1px solid #c9bfb1;border-bottom:none;background:#958573"></div>
<div class="abs" style="left:172px;top:737px;width:52px;height:7px;box-sizing:border-box;border:1px solid #c9bfb1;border-bottom:none;background:#958573"></div>
<div class="abs" style="left:38px;top:743px;width:7px;height:1px;background:#f0f0f0"></div>
<svg class="abs" style="left:76px;top:740px" width="20" height="4" viewBox="0 0 20 4"><path d="M4 0L7 4H1Z M15.5 0L18.5 4H12.5Z" fill="#fff"/></svg>
<div class="abs" style="left:126px;top:740px;width:32px;height:6px;border-radius:3px;background:#5a5a5a"></div>
<div class="abs" style="left:189px;top:741px;width:18px;height:8px;border-radius:9px 9px 0 0;background:#8fc800"></div>
</body></html>
